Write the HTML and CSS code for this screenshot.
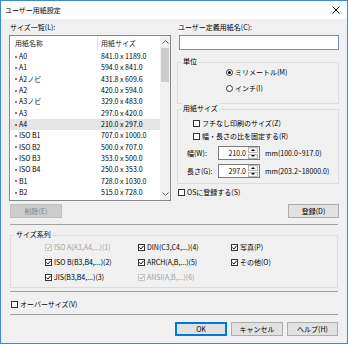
FILE: index.html
```html
<!DOCTYPE html>
<html lang="ja">
<head>
    <meta charset="UTF-8">
    <meta name="viewport" content="width=device-width, initial-scale=1.0">
    <title>ユーザー用紙設定</title>
    <link rel="stylesheet" href="styles.css">
</head>
<body>
    <div class="dialog">
        <div class="titlebar">
            <span class="title">ユーザー用紙設定</span>
            <svg class="close" width="8" height="8" viewBox="0 0 8 8"><path d="M0.5 0.5 L7.5 7.5 M7.5 0.5 L0.5 7.5"/></svg>
        </div>

        <div class="content">
            <div class="top">
                <div class="col">
                    <div class="label">サイズ一覧(L):</div>
                    <div class="listbox">
                        <div class="list">
                            <div class="list-head">
                                <span class="c-name">用紙名称</span>
                                <span class="c-size">用紙サイズ</span>
                            </div>
                            <div class="row"><span class="c-name"><i class="dot"></i>A0</span><span class="c-size">841.0 x 1189.0</span></div>
                            <div class="row"><span class="c-name"><i class="dot"></i>A1</span><span class="c-size">594.0 x 841.0</span></div>
                            <div class="row"><span class="c-name"><i class="dot"></i>A2ノビ</span><span class="c-size">431.8 x 609.6</span></div>
                            <div class="row"><span class="c-name"><i class="dot"></i>A2</span><span class="c-size">420.0 x 594.0</span></div>
                            <div class="row"><span class="c-name"><i class="dot"></i>A3ノビ</span><span class="c-size">329.0 x 483.0</span></div>
                            <div class="row"><span class="c-name"><i class="dot"></i>A3</span><span class="c-size">297.0 x 420.0</span></div>
                            <div class="row selected"><span class="c-name"><i class="dot"></i>A4</span><span class="c-size">210.0 x 297.0</span></div>
                            <div class="row"><span class="c-name"><i class="dot"></i>ISO B1</span><span class="c-size">707.0 x 1000.0</span></div>
                            <div class="row"><span class="c-name"><i class="dot"></i>ISO B2</span><span class="c-size">500.0 x 707.0</span></div>
                            <div class="row"><span class="c-name"><i class="dot"></i>ISO B3</span><span class="c-size">353.0 x 500.0</span></div>
                            <div class="row"><span class="c-name"><i class="dot"></i>ISO B4</span><span class="c-size">250.0 x 353.0</span></div>
                            <div class="row"><span class="c-name"><i class="dot"></i>B1</span><span class="c-size">728.0 x 1030.0</span></div>
                            <div class="row"><span class="c-name"><i class="dot"></i>B2</span><span class="c-size">515.0 x 728.0</span></div>
                        </div>
                        <div class="scrollbar">
                            <div class="sb-arrow"><svg width="7" height="4" viewBox="0 0 7 4"><polyline points="0.5,3.5 3.5,0.5 6.5,3.5"/></svg></div>
                            <div class="thumb"></div>
                            <div class="sb-space"></div>
                            <div class="sb-arrow"><svg width="7" height="4" viewBox="0 0 7 4"><polyline points="0.5,0.5 3.5,3.5 6.5,0.5"/></svg></div>
                        </div>
                    </div>
                    <button class="btn btn-del">削除(E)</button>
                </div>

                <div class="col">
                    <div class="label">ユーザー定義用紙名(C):</div>
                    <div class="name-input"></div>

                    <div class="group unit-group">
                        <span class="group-title">単位</span>
                        <div class="radio-row"><span class="radio on"></span>ミリメートル(M)</div>
                        <div class="radio-row"><span class="radio"></span>インチ(I)</div>
                    </div>

                    <div class="group size-group">
                        <span class="group-title">用紙サイズ</span>
                        <div class="check-row indent"><span class="check"></span>フチなし印刷のサイズ(Z)</div>
                        <div class="check-row indent"><span class="check"></span>幅・長さの比を固定する(R)</div>
                        <div class="spin-row">
                            <span class="spin-label">幅(W):</span>
                            <div class="spin">
                                <span class="spin-value">210.0</span>
                                <div class="spin-btns"><span class="up"></span><span class="down"></span></div>
                            </div>
                            <span class="range">mm(100.0~917.0)</span>
                        </div>
                        <div class="spin-row">
                            <span class="spin-label">長さ(G):</span>
                            <div class="spin">
                                <span class="spin-value">297.0</span>
                                <div class="spin-btns"><span class="up"></span><span class="down"></span></div>
                            </div>
                            <span class="range">mm(203.2~18000.0)</span>
                        </div>
                    </div>

                    <div class="check-row os-row"><span class="check"></span>OSに登録する(S)</div>
                    <button class="btn btn-reg">登録(D)</button>
                </div>
            </div>

            <div class="sep"></div>

            <div class="group series-group">
                <span class="group-title">サイズ系列</span>
                <div class="check-row disabled"><span class="check"><svg width="5" height="5" viewBox="0 0 5 5"><polyline points="0.3,2.5 1.9,4 4.7,0.8"/></svg></span>ISO A(A3,A4,...)(1)</div>
                <div class="check-row"><span class="check"><svg width="5" height="5" viewBox="0 0 5 5"><polyline points="0.3,2.5 1.9,4 4.7,0.8"/></svg></span>ISO B(B3,B4,...)(2)</div>
                <div class="check-row"><span class="check"><svg width="5" height="5" viewBox="0 0 5 5"><polyline points="0.3,2.5 1.9,4 4.7,0.8"/></svg></span>JIS(B3,B4,...)(3)</div>
                <div class="check-row"><span class="check"><svg width="5" height="5" viewBox="0 0 5 5"><polyline points="0.3,2.5 1.9,4 4.7,0.8"/></svg></span>DIN(C3,C4,...)(4)</div>
                <div class="check-row"><span class="check"><svg width="5" height="5" viewBox="0 0 5 5"><polyline points="0.3,2.5 1.9,4 4.7,0.8"/></svg></span>ARCH(A,B,...)(5)</div>
                <div class="check-row disabled"><span class="check"><svg width="5" height="5" viewBox="0 0 5 5"><polyline points="0.3,2.5 1.9,4 4.7,0.8"/></svg></span>ANSI(A,B,...)(6)</div>
                <div class="check-row"><span class="check"><svg width="5" height="5" viewBox="0 0 5 5"><polyline points="0.3,2.5 1.9,4 4.7,0.8"/></svg></span>写真(P)</div>
                <div class="check-row"><span class="check"><svg width="5" height="5" viewBox="0 0 5 5"><polyline points="0.3,2.5 1.9,4 4.7,0.8"/></svg></span>その他(O)</div>
            </div>

            <div class="sep sep-2"></div>

            <div class="check-row oversize-row"><span class="check"></span>オーバーサイズ(V)</div>

            <div class="sep sep-3"></div>

            <div class="footer">
                <button class="btn btn-ok">OK</button>
                <button class="btn">キャンセル</button>
                <button class="btn btn-help">ヘルプ(H)</button>
            </div>
        </div>
    </div>
</body>
</html>
```

FILE: styles.css
```css
* {
    box-sizing: border-box;
}

body {
    margin: 0;
    font-family: "Noto Sans CJK JP", "Noto Sans", sans-serif;
    font-size: 7px;
    color: #000;
}

.dialog {
    width: 348px;
    height: 344px;
    border: 1px solid #3d8ad6;
    background: #f0f0f0;
    overflow: hidden;
}

.titlebar {
    height: 18px;
    background: #fff;
    display: flex;
    align-items: center;
    justify-content: space-between;
    padding: 0 7px 0 4px;
}

.title {
    line-height: 18px;
}

.close path {
    stroke: #000;
    stroke-width: 1;
    fill: none;
}

.content {
    padding: 0 8px;
}

.top {
    display: flex;
    gap: 6px;
}

.col {
    width: 162px;
    display: flex;
    flex-direction: column;
}

.label {
    height: 16px;
    line-height: 16px;
    padding-left: 1px;
}

/* list */
.listbox {
    height: 166px;
    border: 1px solid #828790;
    background: #fff;
    display: flex;
}

.list {
    flex: 1;
}

.list-head {
    display: flex;
    height: 15px;
    line-height: 15px;
    color: #222;
}

.c-name {
    width: 88px;
    padding-left: 5px;
    display: flex;
    align-items: center;
    gap: 2px;
}

.list-head .c-name {
    border-right: 1px solid #e5e5e5;
}

.c-size {
    padding-left: 3px;
}

.row {
    display: flex;
    height: 11.33px;
    line-height: 11.33px;
}

.row.selected {
    background: #e5e5e5;
}

.dot {
    width: 2px;
    height: 2px;
    border-radius: 50%;
    background: #e0182d;
}

.scrollbar {
    width: 10px;
    background: #f0f0f0;
    display: flex;
    flex-direction: column;
    align-items: center;
}

.sb-arrow {
    height: 12px;
    display: flex;
    align-items: center;
    justify-content: center;
}

.sb-arrow polyline {
    stroke: #606060;
    stroke-width: 1;
    fill: none;
}

.thumb {
    width: 8px;
    height: 34px;
    background: #cdcdcd;
}

.sb-space {
    flex: 1;
}

/* buttons */
.btn {
    font: inherit;
    height: 14px;
    width: 52px;
    padding: 0;
    line-height: 12px;
    background: #e1e1e1;
    border: 1px solid #adadad;
    color: #000;
}

.btn-del {
    margin: 3px 0 0 1px;
    color: #838383;
    background: #cccccc;
    border-color: #bfbfbf;
}

.btn-reg {
    align-self: flex-end;
    width: 51px;
    margin-top: 6px;
}

.btn-ok {
    border-color: #0078d7;
    box-shadow: inset 0 0 0 1px #0078d7;
}

.btn-help {
    width: 51px;
}

/* right column */
.name-input {
    height: 15px;
    width: 160px;
    margin-left: 2px;
    background: #fff;
    border: 1px solid #6d8fc6;
}

.group {
    position: relative;
    border: 1px solid #dcdcdc;
}

.group-title {
    position: absolute;
    top: -7px;
    left: 4px;
    padding: 0 1px;
    line-height: 10px;
    background: #f0f0f0;
}

.unit-group {
    margin-top: 12px;
    height: 42px;
    padding: 3px 0 0 48px;
}

.radio-row {
    display: flex;
    align-items: center;
    gap: 2px;
    height: 12px;
}

.radio-row + .radio-row {
    margin-top: 4px;
}

.radio {
    width: 7px;
    height: 7px;
    border: 1px solid #333;
    border-radius: 50%;
    background: #fff;
    display: flex;
    align-items: center;
    justify-content: center;
}

.radio.on::after {
    content: "";
    width: 3px;
    height: 3px;
    border-radius: 50%;
    background: #000;
}

.size-group {
    margin-top: 5px;
    height: 75px;
    padding: 7px 0 0 9px;
}

.check-row {
    display: flex;
    align-items: center;
    gap: 2px;
    height: 12px;
    white-space: nowrap;
}

.check-row.indent {
    margin-left: 6px;
}

.check-row.indent + .check-row.indent {
    margin-top: 1px;
}

.check {
    width: 7px;
    height: 7px;
    border: 1px solid #333;
    background: #fff;
    display: flex;
    align-items: center;
    justify-content: center;
    flex-shrink: 0;
}

.check polyline {
    stroke: #000;
    stroke-width: 1;
    fill: none;
}

.check-row.disabled {
    color: #a0a0a0;
}

.check-row.disabled .check {
    border-color: #c8c8c8;
    background: #f7f7f7;
}

.check-row.disabled polyline {
    stroke: #a0a0a0;
}

.spin-row {
    display: flex;
    align-items: center;
    height: 14px;
    margin-top: 4px;
}

.spin-label {
    width: 31px;
}

.spin {
    width: 42px;
    height: 14px;
    border: 1px solid #7a7a7a;
    background: #fff;
    display: flex;
}

.spin-value {
    flex: 1;
    text-align: right;
    padding-right: 2px;
    line-height: 12px;
}

.spin-btns {
    width: 11px;
    display: flex;
    flex-direction: column;
    gap: 1px;
    padding: 0 1px 0 0;
}

.spin-btns span {
    flex: 1;
    border: 1px solid #b5b5b5;
    background: #f4f4f4;
    display: flex;
    align-items: center;
    justify-content: center;
}

.spin-btns .up::after {
    content: "";
    border-left: 2px solid transparent;
    border-right: 2px solid transparent;
    border-bottom: 2px solid #000;
}

.spin-btns .down::after {
    content: "";
    border-left: 2px solid transparent;
    border-right: 2px solid transparent;
    border-top: 2px solid #000;
}

.range {
    margin-left: 5px;
    white-space: nowrap;
}

.os-row {
    margin: 2px 0 0 1px;
}

/* lower part */
.sep {
    height: 1px;
    background: #a0a0a0;
    margin: 6px 1px 0;
}

.sep-2 {
    margin-top: 3px;
}

.sep-3 {
    margin-top: 4px;
}

.series-group {
    margin: 10px 1px 0;
    height: 53px;
    padding: 5px 0 0 34px;
    display: grid;
    grid-template-columns: 93px 93px 93px;
    grid-template-rows: repeat(3, 12px);
    grid-auto-flow: column;
    row-gap: 3px;
}

.oversize-row {
    margin: 6px 0 0 2px;
}

.footer {
    display: flex;
    justify-content: flex-end;
    gap: 4px;
    margin: 7px 1px 0 0;
}
```
